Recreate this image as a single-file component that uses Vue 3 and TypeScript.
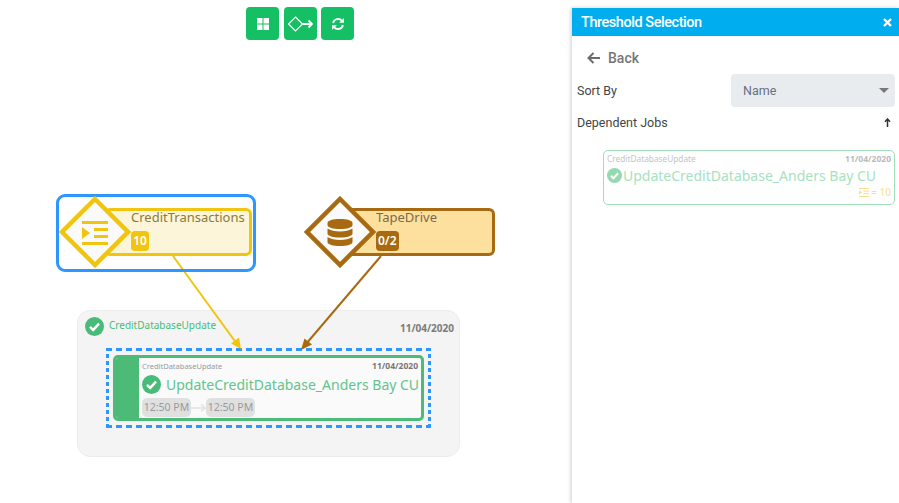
<script setup lang="ts">
const toolbarButtons = ['grid', 'flow', 'refresh']
</script>

<template>
  <div class="page">
    <div class="toolbar">
      <button v-for="b in toolbarButtons" :key="b" class="tool-btn" :aria-label="b">
        <svg v-if="b === 'grid'" width="14" height="14" viewBox="0 0 14 14" fill="#fff">
          <rect x="1" y="1" width="5.5" height="5.5" />
          <rect x="7.5" y="1" width="5.5" height="5.5" />
          <rect x="1" y="7.5" width="5.5" height="5.5" />
          <rect x="7.5" y="7.5" width="5.5" height="5.5" />
        </svg>
        <svg v-else-if="b === 'flow'" width="26" height="16" viewBox="0 0 26 16" fill="none" stroke="#fff">
          <path d="M8.5 1 15.5 8 8.5 15 1.5 8Z" stroke-width="1.2" />
          <path d="M15.5 8H25M21.5 4.5 25 8 21.5 11.5" stroke-width="1.8" />
        </svg>
        <svg v-else width="14" height="14" viewBox="0 0 14 14" fill="none" stroke="#fff" stroke-width="1.9">
          <path d="M2.1 6A5 5 0 0 1 10.8 3.7" />
          <path d="M11.9 8A5 5 0 0 1 3.2 10.3" />
          <path d="M13 1v4.8H8.2z" fill="#fff" stroke="none" />
          <path d="M1 13V8.2h4.8z" fill="#fff" stroke="none" />
        </svg>
      </button>
    </div>

    <!-- group behind the edges -->
    <div class="group">
      <div class="group-head">
        <svg class="check" width="19" height="19" viewBox="0 0 20 20">
          <circle cx="10" cy="10" r="10" fill="#48bb78" />
          <path d="M5.2 10.3 8.6 13.6 14.8 7" fill="none" stroke="#fff" stroke-width="2.6" />
        </svg>
        <span class="group-name">CreditDatabaseUpdate</span>
        <span class="group-date">11/04/2020</span>
      </div>
      <div class="selection">
        <div class="job">
          <div class="job-strip"></div>
          <div class="job-body">
            <div class="job-top">
              <span>CreditDatabaseUpdate</span>
              <b>11/04/2020</b>
            </div>
            <div class="job-title">
              <svg width="19" height="19" viewBox="0 0 20 20">
                <circle cx="10" cy="10" r="10" fill="#48bb78" />
                <path d="M5.2 10.3 8.6 13.6 14.8 7" fill="none" stroke="#fff" stroke-width="2.6" />
              </svg>
              <span>UpdateCreditDatabase_Anders Bay CU</span>
            </div>
            <div class="job-times">
              <span class="time">12:50 PM</span>
              <svg width="15" height="10" viewBox="0 0 15 10" fill="none" stroke="#e2e2e2" stroke-width="1.6">
                <path d="M0 5H14M10 1.5 14 5 10 8.5" />
              </svg>
              <span class="time">12:50 PM</span>
            </div>
          </div>
        </div>
      </div>
    </div>

    <svg class="edges" width="572" height="503" viewBox="0 0 572 503" fill="none">
      <path d="M173 256 237 344" stroke="#f1c40f" stroke-width="2" />
      <path d="M241 349 231 343.5 239 337.5Z" fill="#f1c40f" />
      <path d="M381 256 306 344" stroke="#a86a10" stroke-width="2" />
      <path d="M301 350 304.5 338.5 312 344.5Z" fill="#a86a10" />
    </svg>

    <!-- CreditTransactions node -->
    <div class="node-select">
      <div class="node node-yellow">
        <span class="node-name">CreditTransactions</span>
        <span class="node-badge">10</span>
      </div>
      <svg class="diamond" width="72" height="72" viewBox="0 0 72 72">
        <path d="M36 3 69 36 36 69 3 36Z" fill="#fafafa" stroke="#f1c40f" stroke-width="4.5" />
        <g fill="#f1c40f">
          <rect x="23" y="25" width="26" height="3" />
          <rect x="35" y="32" width="14" height="3" />
          <rect x="35" y="39" width="14" height="3" />
          <rect x="23" y="46" width="26" height="3" />
          <path d="M23 31 31 37 23 43Z" />
        </g>
      </svg>
    </div>

    <!-- TapeDrive node -->
    <div class="tape">
      <div class="node node-brown">
        <span class="node-name">TapeDrive</span>
        <span class="node-badge">0/2</span>
      </div>
      <svg class="diamond" width="72" height="72" viewBox="0 0 72 72">
        <path d="M36 3 69 36 36 69 3 36Z" fill="#fafafa" stroke="#a86a10" stroke-width="4.5" />
        <g fill="#a86a10">
          <path d="M23.5 27c0-2.500 5.500-4 12.500-4s12.500 1.500 12.500 4v2c0 2.500-5.500 4-12.500 4s-12.500-1.500-12.500-4z" />
          <path d="M23.5 32.500c3 2 7.500 3 12.500 3s9.500-1 12.500-3v5c0 2.500-5.500 4-12.500 4s-12.500-1.500-12.500-4z" />
          <path d="M23.5 41c3 2 7.500 3 12.500 3s9.500-1 12.500-3v5c0 2.500-5.500 4-12.500 4s-12.500-1.500-12.500-4z" />
        </g>
      </svg>
    </div>

    <aside class="panel">
      <header class="panel-head">
        <span>Threshold Selection</span>
        <svg width="9" height="9" viewBox="0 0 9 9" stroke="#fff" stroke-width="2.4">
          <path d="M1 1 8 8M8 1 1 8" />
        </svg>
      </header>
      <div class="back">
        <svg width="13" height="12" viewBox="0 0 13 12" fill="none" stroke="#6b6b6b" stroke-width="2">
          <path d="M13 6H2M6.500 1 1.500 6l5 5" />
        </svg>
        <span>Back</span>
      </div>
      <div class="sort">
        <span>Sort By</span>
        <div class="select">
          <span>Name</span>
          <i class="caret"></i>
        </div>
      </div>
      <div class="dep">
        <span>Dependent Jobs</span>
        <svg width="7" height="9" viewBox="0 0 7 9" fill="none" stroke="#333" stroke-width="1.5">
          <path d="M3.5 9V1.500M1 3.800 3.500 1 6 3.800" />
        </svg>
      </div>
      <div class="dep-card">
        <div class="dep-top">
          <span>CreditDatabaseUpdate</span>
          <b>11/04/2020</b>
        </div>
        <div class="dep-title">
          <svg width="15" height="15" viewBox="0 0 20 20">
            <circle cx="10" cy="10" r="10" fill="#94d9b0" />
            <path d="M5.2 10.3 8.6 13.6 14.8 7" fill="none" stroke="#fff" stroke-width="2.8" />
          </svg>
          <span>UpdateCreditDatabase_Anders Bay CU</span>
        </div>
        <div class="dep-foot">
          <svg width="10" height="9" viewBox="0 0 10 9" fill="#f8e08a">
            <rect x="0" y="0" width="10" height="1" />
            <rect x="4.5" y="2.7" width="5.5" height="1" />
            <rect x="4.5" y="5.2" width="5.5" height="1" />
            <rect x="0" y="8" width="10" height="1" />
            <path d="M0 2.2 3 4.5 0 6.8Z" />
          </svg>
          <span>= 10</span>
        </div>
      </div>
    </aside>
  </div>
</template>

<style>
html, body {
  margin: 0;
  background: #fff;
}
</style>

<style scoped>
.page {
  position: relative;
  width: 899px;
  height: 503px;
  overflow: hidden;
  background: #fff;
  font-family: "Noto Sans", sans-serif;
}

.toolbar {
  position: absolute;
  left: 246px;
  top: 7px;
  display: flex;
  gap: 4.5px;
}
.tool-btn {
  width: 33px;
  height: 33px;
  padding: 0;
  border: 0;
  border-radius: 4px;
  background: #15bf63;
  display: flex;
  align-items: center;
  justify-content: center;
}

.group {
  position: absolute;
  left: 77px;
  top: 310px;
  box-sizing: border-box;
  width: 383px;
  height: 147px;
  padding: 5px 5px 0 7px;
  border: 1px solid #ececec;
  border-radius: 13px;
  background: #f4f4f4;
}
.group-head {
  display: flex;
  align-items: center;
  gap: 5px;
  height: 20px;
}
.group-head svg {
  flex-shrink: 0;
}
.group-name {
  color: #48bb78;
  font-size: 10px;
  transform: translateY(-1px);
}
.group-date {
  margin-left: auto;
  color: #7b7b7b;
  font-size: 10px;
  font-weight: 700;
  transform: translateY(2px);
}
/* hand-made dashes: 6 on, 4 off along the sides */
.selection {
  box-sizing: border-box;
  width: 325px;
  height: 80px;
  margin: 12px 0 0 21px;
  padding: 7px;
  background:
    repeating-linear-gradient(90deg, #2d96ff 0 6px, transparent 6px 10px) top / 100% 3px no-repeat,
    repeating-linear-gradient(90deg, #2d96ff 0 6px, transparent 6px 10px) bottom / 100% 3px no-repeat,
    repeating-linear-gradient(0deg, #2d96ff 0 4px, transparent 4px 7px) left / 3px 100% no-repeat,
    repeating-linear-gradient(0deg, #2d96ff 0 4px, transparent 4px 7px) right / 3px 100% no-repeat;
}
.job {
  display: flex;
  box-sizing: border-box;
  height: 66px;
  border: 3px solid #4cbb78;
  border-radius: 5px;
  background: #fafafa;
  overflow: hidden;
}
.job-strip {
  flex: 0 0 23px;
  background: #4cbb78;
}
.job-body {
  flex: 1;
  min-width: 0;
  padding: 2px 3px 0 3px;
}
.job-top {
  display: flex;
  justify-content: space-between;
  align-items: center;
  height: 11px;
  font-size: 7.5px;
  color: #999;
}
.job-top b {
  color: #777;
  font-size: 8.5px;
}
.job-title {
  display: flex;
  align-items: center;
  gap: 5px;
  margin-top: 1px;
  height: 24px;
  color: #62c48c;
  font-size: 14px;
  white-space: nowrap;
}
.job-title svg {
  flex-shrink: 0;
}
.job-times {
  display: flex;
  align-items: center;
  margin-top: 2px;
}
.time {
  display: block;
  width: 49px;
  padding: 3px 0;
  border-radius: 5px;
  background: #e0e0e0;
  color: #999;
  font-size: 10.5px;
  line-height: 13px;
  text-align: center;
}

.edges {
  position: absolute;
  left: 0;
  top: 0;
}

.node-select {
  position: absolute;
  left: 56px;
  top: 194px;
  box-sizing: border-box;
  width: 200px;
  height: 78px;
  border: 3px solid #2d96ff;
  border-radius: 9px;
}
.node-select .node {
  position: absolute;
  left: 45px;
  top: 11px;
  width: 148px;
  padding-left: 24px;
}
.node-select .diamond {
  position: absolute;
  left: 0;
  top: -1px;
}
.tape {
  position: absolute;
  left: 304px;
  top: 196px;
  width: 191px;
  height: 73px;
}
.tape .node {
  position: absolute;
  left: 36px;
  top: 12px;
  width: 155px;
  padding-left: 33px;
}
.tape .diamond {
  position: absolute;
  left: 0;
  top: 0;
}
.node {
  box-sizing: border-box;
  height: 48px;
  padding: 0 3px 0 0;
  border: 3px solid;
  border-radius: 6px;
  display: flex;
  flex-direction: column;
  align-items: flex-start;
  gap: 7px;
}
.node-yellow {
  background: #fdf5d9;
  border-color: #f1c40f;
  color: #8c7a35;
}
.node-brown {
  background: #fddf9e;
  border-color: #a86a10;
  color: #7d6a45;
}
.node-name {
  margin-top: -1px;
  font-size: 13px;
  line-height: 14px;
  white-space: nowrap;
}
.node-badge {
  padding: 0 2px;
  min-width: 14px;
  height: 20px;
  border-radius: 4px;
  color: #fff;
  font-size: 12px;
  font-weight: 600;
  line-height: 20px;
  text-align: center;
}
.node-yellow .node-badge {
  background: #f1c40f;
}
.node-brown .node-badge {
  background: #a86a10;
}

.panel {
  position: absolute;
  left: 572px;
  top: 8px;
  bottom: 0;
  width: 327px;
  background: #fff;
  box-shadow: -1px 0 4px rgba(0, 0, 0, 0.2);
  font-family: Roboto, sans-serif;
}
.panel-head {
  display: flex;
  align-items: center;
  justify-content: space-between;
  height: 28px;
  padding: 0 7px 0 9px;
  background: #00aeef;
  color: #fff;
  font-size: 14.5px;
  font-weight: 500;
  letter-spacing: -0.45px;
}
.back {
  display: flex;
  align-items: center;
  gap: 8px;
  margin: 13px 0 0 15px;
  height: 18px;
  color: #777;
  font-size: 14px;
  font-weight: 500;
}
.sort {
  display: flex;
  align-items: center;
  justify-content: space-between;
  margin: 7px 4px 0 5px;
  color: #444;
  font-size: 12.5px;
}
.select {
  display: flex;
  align-items: center;
  justify-content: space-between;
  box-sizing: border-box;
  width: 164px;
  height: 33px;
  padding: 0 6px 0 12px;
  border-radius: 4px;
  background: #e9ecef;
  color: #667080;
}
.caret {
  width: 0;
  height: 0;
  border-left: 5px solid transparent;
  border-right: 5px solid transparent;
  border-top: 5px solid #777;
}
.dep {
  display: flex;
  align-items: center;
  justify-content: space-between;
  margin: 6px 8px 0 5px;
  height: 18px;
  color: #444;
  font-size: 12.5px;
}
.dep-card {
  box-sizing: border-box;
  width: 292px;
  height: 55px;
  margin: 19px 0 0 31px;
  padding: 2px 3px 0 3px;
  border: 1px solid #9fe0b8;
  border-radius: 5px;
  font-family: "Noto Sans", sans-serif;
}
.dep-top {
  display: flex;
  justify-content: space-between;
  align-items: center;
  height: 10px;
  color: #c4c4c4;
  font-size: 8.3px;
}
.dep-top b {
  color: #bbb;
  font-size: 8.5px;
}
.dep-title {
  display: flex;
  align-items: center;
  gap: 1px;
  margin-top: 2px;
  height: 20px;
  color: #a6e2bf;
  font-size: 14px;
  white-space: nowrap;
}
.dep-title svg {
  flex-shrink: 0;
}
.dep-foot {
  display: flex;
  align-items: center;
  justify-content: flex-end;
  gap: 2px;
  margin-top: 1px;
  color: #f8e08a;
  font-size: 10px;
  line-height: 12px;
}
</style>
